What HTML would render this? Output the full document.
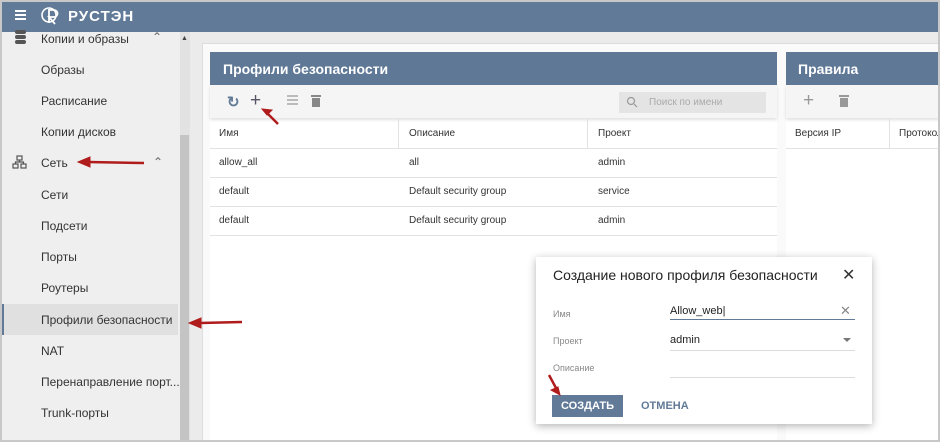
<!DOCTYPE html>
<html><head><meta charset="utf-8"><style>
*{box-sizing:border-box;margin:0;padding:0}
body{width:940px;height:442px;overflow:hidden;font-family:"Liberation Sans",Arial,sans-serif;background:#ebebeb;position:relative;font-size:11px;color:#333}
.frame{position:absolute;inset:0;border:2px solid #c8c8c8;pointer-events:none;z-index:50}
.top{position:absolute;left:0;top:0;width:940px;height:32px;background:#617a97;color:#fff}
.side{position:absolute;left:0;top:32px;width:180px;height:410px;background:#efefef}
.side div{position:absolute;left:41px;font-size:12px;color:#333}
.track{position:absolute;left:180px;top:32px;width:10px;height:410px;background:#e2e2e2}
.thumb{position:absolute;left:180px;top:135px;width:9px;height:307px;background:#c4c4c4}
.content{position:absolute;left:202px;top:43px;width:738px;height:399px;background:#fafafa;border-top:1px solid #ddd;border-left:1px solid #ddd}
.p{position:absolute;background:#fff}
.ph{position:absolute;background:#5f7896;color:#fff;font-weight:bold;font-size:14px}
.cell{position:absolute;font-size:10px;color:#333}
.hl{position:absolute;height:1px;background:#e2e2e2}
.vl{position:absolute;width:1px;background:#e2e2e2}
</style></head><body>
<div class="top">
 <div style="position:absolute;left:15px;top:10px;width:11px;height:2px;background:#fff;box-shadow:0 4px 0 #fff,0 8px 0 #fff"></div>
 <svg style="position:absolute;left:40px;top:5px" width="24" height="22" viewBox="0 0 24 22"><circle cx="9" cy="10" r="7" fill="none" stroke="#fff" stroke-width="1.6"/><path d="M9 4v14M9 5h5a3.5 3.5 0 0 1 0 7h-5l6 7" fill="none" stroke="#fff" stroke-width="1.8"/></svg>
 <div style="position:absolute;left:68px;top:8px;font-size:15px;font-weight:bold;letter-spacing:1px">РУСТЭН</div>
</div>
<div class="side">
 <svg style="position:absolute;left:15px;top:-2px" width="12" height="14"><rect x="0" y="0" width="11" height="4" rx="2" fill="#555"/><rect x="0" y="5" width="11" height="4" rx="2" fill="#555"/><rect x="0" y="10" width="11" height="4" rx="2" fill="#555"/></svg>
 <div style="top:0">Копии и образы</div>
 <div style="left:152px;top:-2px;color:#666">&#8963;</div>
 <div style="top:31px">Образы</div>
 <div style="top:62px">Расписание</div>
 <div style="top:93px">Копии дисков</div>
 <svg style="position:absolute;left:12px;top:123px" width="16" height="14" fill="none" stroke="#555" stroke-width="1.2"><rect x="5" y="1" width="5" height="4"/><rect x="1" y="9" width="5" height="4"/><rect x="9" y="9" width="5" height="4"/><path d="M7.5 5v2M3.5 9V7h8v2"/></svg>
 <div style="top:124px">Сеть</div>
 <div style="left:153px;top:123px;color:#666">&#8963;</div>
 <div style="top:156px">Сети</div>
 <div style="top:187px">Подсети</div>
 <div style="top:218px">Порты</div>
 <div style="top:249px">Роутеры</div>
 <span style="position:absolute;left:2px;top:272px;width:176px;height:31px;background:#e0e0e0;border-left:2px solid #617a97"></span>
 <div style="top:281px">Профили безопасности</div>
 <div style="top:312px">NAT</div>
 <div style="top:343px">Перенаправление порт...</div>
 <div style="top:374px">Trunk-порты</div>
</div>
<div class="track"></div><div class="thumb"></div>
<div style="position:absolute;left:181px;top:35px;font-size:7px;color:#444">▲</div>
<div class="content"></div>
<div class="p" style="left:210px;top:52px;width:567px;height:390px"></div>
<div class="ph" style="left:210px;top:52px;width:567px;height:33px;padding:9px 13px">Профили безопасности</div>
<div style="position:absolute;left:210px;top:85px;width:567px;height:33px;background:#f5f5f5;box-shadow:0 2px 3px rgba(0,0,0,.12)"></div>
<div style="position:absolute;left:227px;top:93px;font-size:15px;color:#617a97;font-weight:bold">&#8635;</div>
<div style="position:absolute;left:250px;top:90px;font-size:19px;color:#556">+</div>
<div style="position:absolute;left:287px;top:95px;width:11px;height:2px;background:#bbb;box-shadow:0 4px 0 #bbb,0 8px 0 #bbb"></div>
<svg style="position:absolute;left:311px;top:95px" width="10" height="12"><rect x="0" y="0" width="10" height="2" fill="#888"/><rect x="1" y="3" width="8" height="9" fill="#888"/></svg>
<div style="position:absolute;left:619px;top:92px;width:147px;height:21px;background:#e4e4e4;font-size:10px;color:#aaa;padding:5px 0 0 30px">Поиск по имени</div>
<svg style="position:absolute;left:626px;top:96px" width="12" height="12" fill="none" stroke="#999" stroke-width="1.2"><circle cx="5" cy="5" r="3.5"/><path d="M8 8l3 3"/></svg>
<div class="hl" style="left:210px;top:148px;width:567px"></div>
<div class="hl" style="left:210px;top:177px;width:567px"></div>
<div class="hl" style="left:210px;top:206px;width:567px"></div>
<div class="hl" style="left:210px;top:235px;width:567px"></div>
<div class="vl" style="left:398px;top:118px;height:30px"></div>
<div class="vl" style="left:587px;top:118px;height:30px"></div>
<div class="cell" style="left:219px;top:128px">Имя</div><div class="cell" style="left:409px;top:128px">Описание</div><div class="cell" style="left:598px;top:128px">Проект</div>
<div class="cell" style="left:219px;top:157px">allow_all</div><div class="cell" style="left:409px;top:157px">all</div><div class="cell" style="left:598px;top:157px">admin</div>
<div class="cell" style="left:219px;top:186px">default</div><div class="cell" style="left:409px;top:186px">Default security group</div><div class="cell" style="left:598px;top:186px">service</div>
<div class="cell" style="left:219px;top:215px">default</div><div class="cell" style="left:409px;top:215px">Default security group</div><div class="cell" style="left:598px;top:215px">admin</div>
<div class="p" style="left:786px;top:52px;width:154px;height:390px"></div>
<div class="ph" style="left:786px;top:52px;width:154px;height:33px;padding:9px 12px">Правила</div>
<div style="position:absolute;left:786px;top:85px;width:154px;height:33px;background:#f5f5f5;box-shadow:0 2px 3px rgba(0,0,0,.12)"></div>
<div style="position:absolute;left:803px;top:90px;font-size:19px;color:#999">+</div>
<svg style="position:absolute;left:839px;top:95px" width="10" height="12"><rect x="0" y="0" width="10" height="2" fill="#999"/><rect x="1" y="3" width="8" height="9" fill="#999"/></svg>
<div class="hl" style="left:786px;top:148px;width:154px"></div>
<div class="vl" style="left:889px;top:118px;height:30px"></div>
<div class="cell" style="left:795px;top:128px">Версия IP</div><div class="cell" style="left:899px;top:128px">Протокол</div>
<div style="position:absolute;left:536px;top:257px;width:336px;height:167px;background:#fff;box-shadow:0 2px 8px rgba(0,0,0,.3)">
 <div style="position:absolute;left:17px;top:10px;font-size:14px;color:#222">Создание нового профиля безопасности</div>
 <div style="position:absolute;left:306px;top:8px;font-size:16px;color:#333">✕</div>
 <div style="position:absolute;left:17px;top:52px;font-size:9px;color:#888">Имя</div>
 <div style="position:absolute;left:134px;top:48px;font-size:11px;color:#222">Allow_web|</div>
 <div style="position:absolute;left:304px;top:46px;font-size:13px;color:#888">✕</div>
 <div style="position:absolute;left:134px;top:62px;width:185px;height:1px;background:#617a97"></div>
 <div style="position:absolute;left:17px;top:79px;font-size:9px;color:#888">Проект</div>
 <div style="position:absolute;left:134px;top:77px;font-size:11px;color:#222">admin</div>
 <div style="position:absolute;left:307px;top:81px;border:4px solid transparent;border-top:4px solid #777"></div>
 <div style="position:absolute;left:134px;top:93px;width:185px;height:1px;background:#ddd"></div>
 <div style="position:absolute;left:17px;top:106px;font-size:9px;color:#888">Описание</div>
 <div style="position:absolute;left:134px;top:120px;width:185px;height:1px;background:#ddd"></div>
 <div style="position:absolute;left:16px;top:138px;width:71px;height:22px;background:#617a97;color:#fff;font-weight:bold;font-size:11px;text-align:center;line-height:22px">СОЗДАТЬ</div>
 <div style="position:absolute;left:105px;top:143px;font-size:11px;color:#617a97;font-weight:bold">ОТМЕНА</div>
</div>
<svg style="position:absolute;left:0;top:0;z-index:40" width="940" height="442" fill="#b01c1c" stroke="#b01c1c">
 <path d="M278 124L267 113" stroke-width="2.5"/><path d="M262 109l10 1-5 5z"/>
 <path d="M144 163L88 162" stroke-width="2.5"/><path d="M78 162l12-5v10z"/>
 <path d="M242 322L200 323" stroke-width="2.5"/><path d="M189 323l12-5v10z"/>
 <path d="M549 375L556 388" stroke-width="2.5"/><path d="M560 395l-9-5 7-3z"/>
</svg>
<div class="frame"></div>
</body></html>
